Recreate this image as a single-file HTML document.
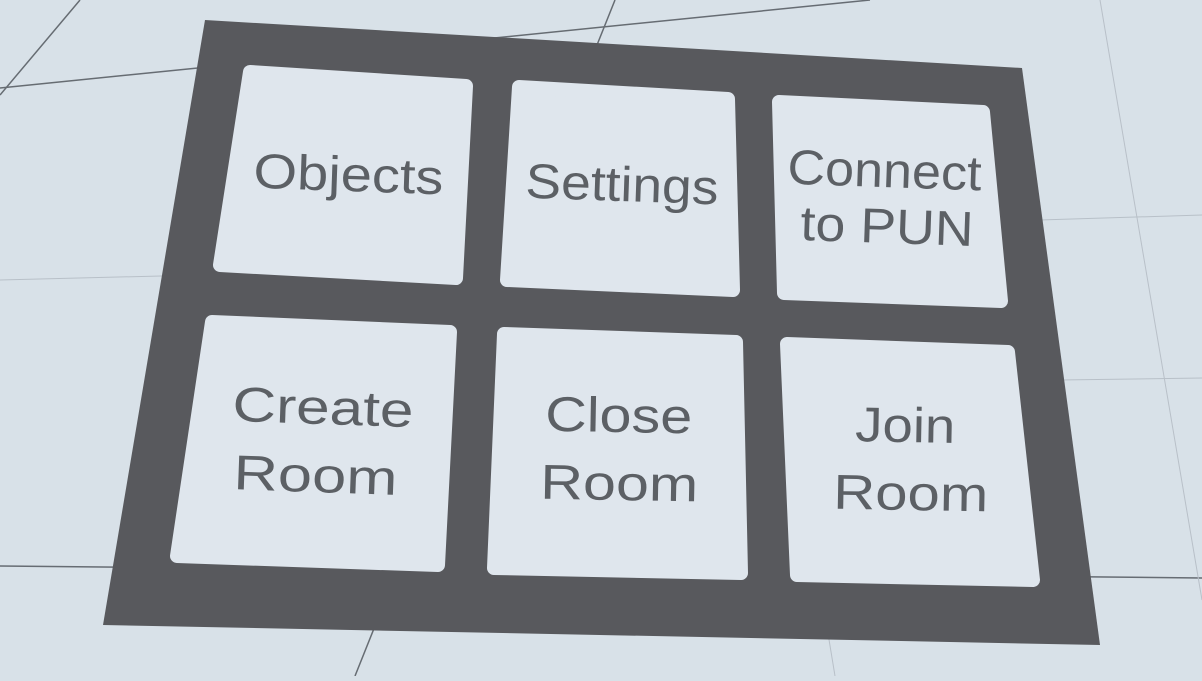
<!DOCTYPE html>
<html><head><style>html,body{margin:0;padding:0;background:#d8e1e8;overflow:hidden}</style></head>
<body>
<svg width="1202" height="676" viewBox="0 0 1202 676" xmlns="http://www.w3.org/2000/svg">
<rect width="1202" height="676" fill="#d8e1e8"/>
<g stroke="#4a4f55" stroke-width="1.5" fill="none" opacity="0.8">
<line x1="0" y1="88" x2="870" y2="0"/>
<line x1="80" y1="0" x2="0" y2="95"/>
<line x1="615" y1="0" x2="583" y2="80"/>
<line x1="0" y1="566" x2="1202" y2="578"/>
<line x1="395" y1="576" x2="355" y2="676"/>
</g>
<g stroke="#b8c0c8" stroke-width="1" fill="none">
<line x1="1100" y1="0" x2="1202" y2="600"/>
<line x1="1040" y1="220" x2="1202" y2="215"/>
<line x1="1060" y1="380" x2="1202" y2="378"/>
<line x1="0" y1="280" x2="200" y2="275"/>
<line x1="820" y1="585" x2="835" y2="676"/>
</g>
<polygon points="205,20 1022,68 1100,645 103,625" fill="#58595d"/>
<g fill="#dfe6ed" stroke="#dfe6ed" stroke-width="14" stroke-linejoin="round">
<polygon points="250,72 466,86 456,278 220,265"/>
<polygon points="519,87 728,99 733,290 507,280"/>
<polygon points="779,102 983,112 1001,301 784,293"/>
<polygon points="212,322 450,332 438,565 177,556"/>
<polygon points="504,334 736,342 741,573 494,568"/>
<polygon points="787,344 1008,352 1033,580 797,575"/>
</g>
<g font-family="Liberation Sans, sans-serif" font-size="49" fill="#5c6065" lengthAdjust="spacingAndGlyphs">
<text x="253" y="191" textLength="190" lengthAdjust="spacingAndGlyphs" transform="rotate(2 348 191)">Objects</text>
<text x="525" y="201" textLength="193" lengthAdjust="spacingAndGlyphs" transform="rotate(2 621 201)">Settings</text>
<text x="787" y="187" textLength="194" lengthAdjust="spacingAndGlyphs" transform="rotate(2 884 187)">Connect</text>
<text x="800" y="243" textLength="173" lengthAdjust="spacingAndGlyphs" transform="rotate(2 887 243)">to PUN</text>
<text x="232" y="424" textLength="181" lengthAdjust="spacingAndGlyphs" transform="rotate(2 322 424)">Create</text>
<text x="233" y="492" textLength="164" lengthAdjust="spacingAndGlyphs" transform="rotate(2 315 492)">Room</text>
<text x="545" y="432" textLength="147" lengthAdjust="spacingAndGlyphs" transform="rotate(1 619 432)">Close</text>
<text x="540" y="500" textLength="158" lengthAdjust="spacingAndGlyphs" transform="rotate(1 618 500)">Room</text>
<text x="855" y="442" textLength="100" lengthAdjust="spacingAndGlyphs" transform="rotate(1 905 442)">Join</text>
<text x="833" y="510" textLength="155" lengthAdjust="spacingAndGlyphs" transform="rotate(1 910 510)">Room</text>
</g>
</svg>
</body></html>
